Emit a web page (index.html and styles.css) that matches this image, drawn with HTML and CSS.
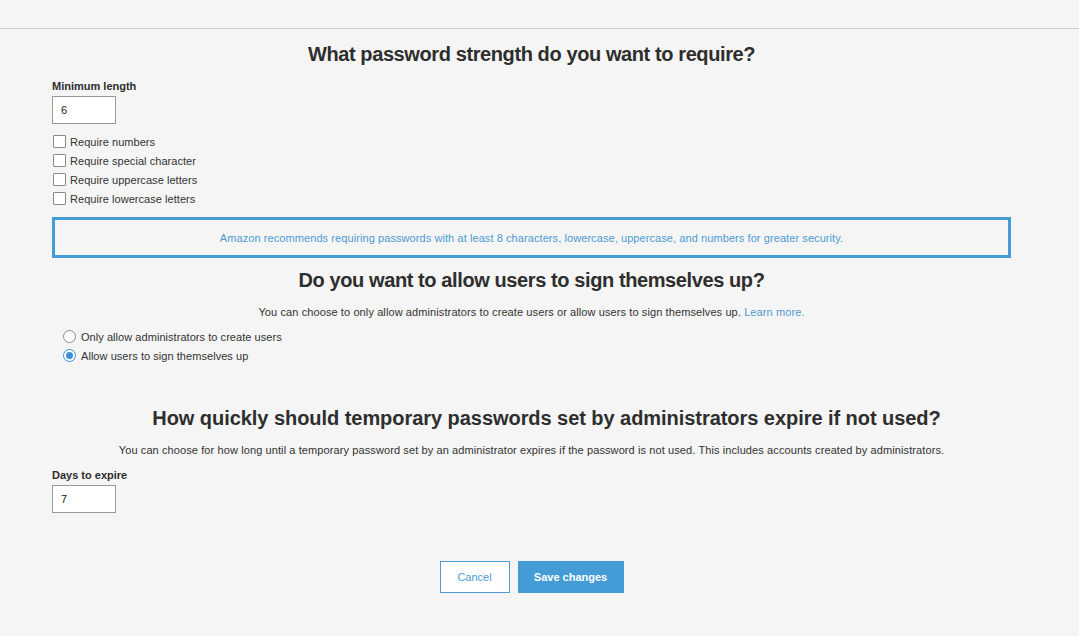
FILE: index.html
```html
<!DOCTYPE html>
<html>
<head>
<meta charset="utf-8">
<link rel="stylesheet" href="styles.css">
</head>
<body>
<div class="topbar"></div>
<main class="content">
  <h2 class="heading h-first">What password strength do you want to require?</h2>
  <div class="field">
    <label class="field-label">Minimum length</label>
    <div class="input-box">6</div>
  </div>
  <ul class="checks">
    <li class="check"><span class="checkbox"></span><span>Require numbers</span></li>
    <li class="check"><span class="checkbox"></span><span>Require special character</span></li>
    <li class="check"><span class="checkbox"></span><span>Require uppercase letters</span></li>
    <li class="check"><span class="checkbox"></span><span>Require lowercase letters</span></li>
  </ul>
  <div class="notice">Amazon recommends requiring passwords with at least 8 characters, lowercase, uppercase, and numbers for greater security.</div>

  <h2 class="heading h-second">Do you want to allow users to sign themselves up?</h2>
  <p class="desc">You can choose to only allow administrators to create users or allow users to sign themselves up. <a class="link">Learn more.</a></p>
  <ul class="radios">
    <li class="radio-row"><span class="radio"></span><span>Only allow administrators to create users</span></li>
    <li class="radio-row"><span class="radio checked"></span><span>Allow users to sign themselves up</span></li>
  </ul>

  <h2 class="heading h-third">How quickly should temporary passwords set by administrators expire if not used?</h2>
  <p class="desc desc-third">You can choose for how long until a temporary password set by an administrator expires if the password is not used. This includes accounts created by administrators.</p>
  <div class="field field-days">
    <label class="field-label">Days to expire</label>
    <div class="input-box">7</div>
  </div>

  <div class="actions">
    <button class="btn btn-cancel">Cancel</button>
    <button class="btn btn-save">Save changes</button>
  </div>
</main>
</body>
</html>
```

FILE: styles.css
```css
* { box-sizing: border-box; }
html, body {
  margin: 0;
  padding: 0;
  background: #f4f5f4;
  font-family: "Liberation Sans", Arial, sans-serif;
  color: #333;
}
.topbar {
  height: 29px;
  border-bottom: 1px solid #cfd0d0;
}
.content {
  margin: 0 68px 0 52px;
  display: flex;
  flex-direction: column;
}
.heading {
  margin: 0;
  font-size: 20px;
  line-height: 24px;
  font-weight: bold;
  text-align: center;
  color: #2e2e2e;
  letter-spacing: -0.4px;
}
.h-first { margin-top: 13px; }
.field { margin-top: 14px; display: flex; flex-direction: column; }
.field-label {
  font-size: 11px;
  font-weight: bold;
  line-height: 13px;
  color: #2e2e2e;
}
.input-box {
  margin-top: 3px;
  width: 64px;
  height: 28px;
  border: 1px solid #999;
  background: #fff;
  font-size: 11px;
  line-height: 26px;
  padding-left: 8px;
  color: #222;
}
.checks, .radios { list-style: none; margin: 0; padding: 0; }
.checks { margin-top: 8px; }
.check {
  display: flex;
  align-items: center;
  height: 19px;
  font-size: 11px;
  letter-spacing: 0.05px;
  color: #333;
}
.checkbox {
  width: 13px;
  height: 13px;
  border: 1px solid #8a8a8a;
  background: #fff;
  margin: 0 4px 0 1px;
  border-radius: 1px;
}
.notice {
  margin-top: 9px;
  height: 41px;
  border: 3px solid #449bd6;
  display: flex;
  align-items: center;
  justify-content: center;
  font-size: 11px;
  letter-spacing: 0.08px;
  color: #4d9bd3;
}
.h-second { margin-top: 10px; }
.desc {
  margin: 14px 0 0;
  text-align: center;
  font-size: 11px;
  line-height: 13px;
  letter-spacing: 0.1px;
  color: #333;
}
.link { color: #4d9bd3; text-decoration: none; }
.radios { margin-top: 8px; }
.radio-row {
  display: flex;
  align-items: center;
  height: 19px;
  font-size: 11px;
  letter-spacing: 0.05px;
  color: #333;
}
.radio {
  width: 13px;
  height: 13px;
  border-radius: 50%;
  border: 1px solid #8a8a8a;
  background: #fff;
  margin: 0 5px 0 11px;
  position: relative;
}
.radio.checked::after {
  content: "";
  position: absolute;
  left: 2px;
  top: 2px;
  width: 7px;
  height: 7px;
  border-radius: 50%;
  background: #3b8fd9;
}
.radio.checked { border-color: #3b8fd9; }
.h-third { margin-top: 41px; padding-left: 30px; letter-spacing: -0.05px; }
.desc-third { margin-top: 14px; }
.field-days { margin-top: 12px; }
.actions {
  margin-top: 48px;
  display: flex;
  justify-content: center;
  gap: 8px;
}
.btn {
  height: 32px;
  font-family: "Liberation Sans", Arial, sans-serif;
  font-size: 11px;
  cursor: pointer;
}
.btn-cancel {
  width: 70px;
  background: #fff;
  border: 1px solid #4d9bd3;
  color: #4d9bd3;
}
.btn-save {
  width: 106px;
  background: #449bd6;
  border: none;
  color: #fff;
  font-weight: bold;
}
```
